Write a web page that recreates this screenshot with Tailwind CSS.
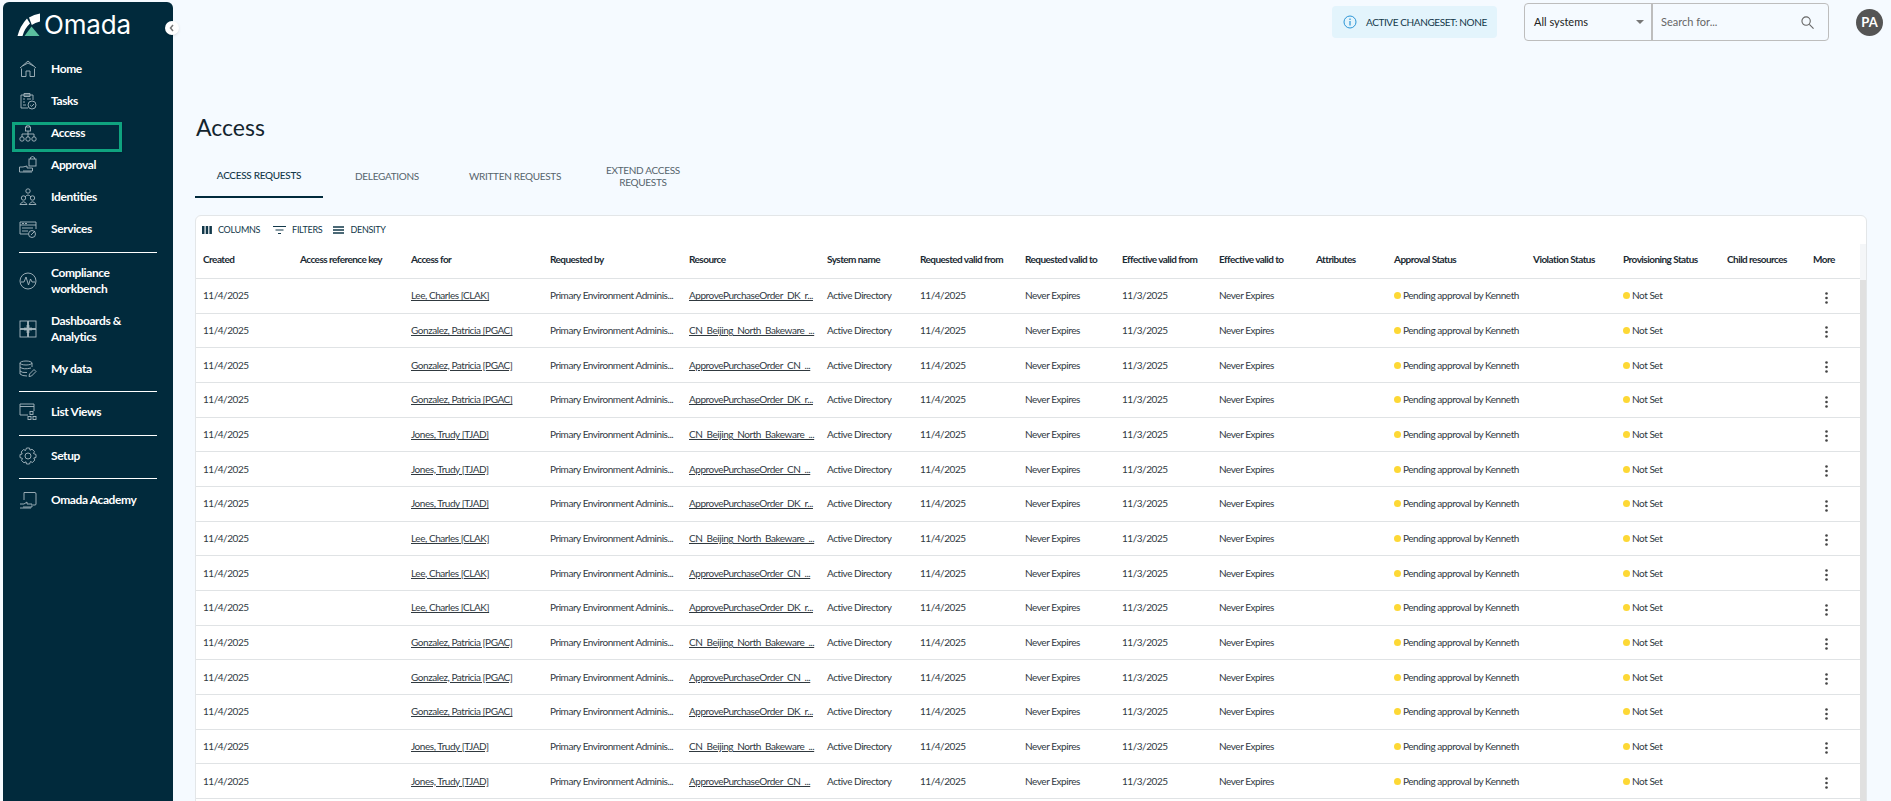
<!DOCTYPE html>
<html>
<head>
<meta charset="utf-8">
<title>Access</title>
<script src="https://cdn.jsdelivr.net/npm/@tailwindcss/browser@4"></script>
</head>
<body class="bg-[#f5faff] h-[801px] overflow-hidden font-['Lato',sans-serif] text-[#1f2a33]">
<div class="flex h-[801px] overflow-hidden">
    <!-- Sidebar -->
    <aside class="relative w-[170px] ml-[3px] mt-[2px] shrink-0 bg-[#012a3c] rounded-t-md text-white">
        <div class="flex items-center h-[40px] pl-[14px] pt-[6px]">
            <svg class="w-[24px] h-[24px] shrink-0" viewBox="0 0 24 24">
                <path d="M0.500 23 Q3 13 10 5.500 L13 10.500 Q7.500 15.500 5.500 23Z" fill="#fff"/>
                <path d="M12 4.500 Q17 1.500 23 0.500 V8.500 Q18 9.500 14.800 12Z" fill="#fff"/>
                <path d="M7.500 23 L14.500 13.500 L22.500 23Z" fill="#5bbf9f"/>
            </svg>
            <span class="ml-[3px] text-[26px] leading-none font-['Inter',sans-serif] tracking-[-0.2px]">Omada</span>
        </div>
        <button class="absolute z-10 right-[-6px] top-[19px] w-[14px] h-[14px] rounded-full bg-white shadow flex items-center justify-center">
            <svg class="w-[8px] h-[8px]" viewBox="0 0 8 8" fill="none" stroke="#777" stroke-width="1.500"><path d="M5 1 L2.500 4 L5 7"/></svg>
        </button>
        <nav class="text-[12px] font-bold tracking-[-0.4px] pt-[11px]">
            <a class="flex items-center h-[32px] pl-[16px]">
                <svg class="w-[18px] h-[18px] shrink-0 text-[#a9b9c1]" viewBox="0 0 18 18" fill="none" stroke="currentColor" stroke-width="0.9"><path d="M1 8 L9 1 L17 8 M2.500 8.500 V16.500 H7 V11 H11 V16.500 H15.500 V8.500 M3.500 6 L9 3 L14.500 6"/></svg>
                <span class="ml-[14px]">Home</span>
            </a>
            <a class="flex items-center h-[32px] pl-[16px]">
                <svg class="w-[18px] h-[18px] shrink-0 text-[#a9b9c1]" viewBox="0 0 18 18" fill="none" stroke="currentColor" stroke-width="0.9"><path d="M9 16 H2 V3 H14 V8 M5 1.500 H11 V4.500 H5Z M4 7 H6 M8 7 H12 M4 10 H6 M4 13 H7"/><circle cx="13" cy="13" r="4"/><path d="M11.200 13 L12.600 14.400 L15 12"/></svg>
                <span class="ml-[14px]">Tasks</span>
            </a>
            <a class="relative flex items-center h-[32px] pl-[16px]">
                <span class="absolute left-[9px] top-[5px] w-[110px] h-[30px] border-[3px] border-[#0fa37f] shadow"></span>
                <svg class="w-[18px] h-[18px] shrink-0 text-[#a9b9c1]" viewBox="0 0 18 18" fill="none" stroke="currentColor" stroke-width="0.9"><rect x="6.500" y="3" width="5" height="4"/><path d="M7.500 3 V1.800 Q9 0 10.500 1.800 V3 M9 7 V10 M3 13 V10 H15 V13 M9 10 V13"/><circle cx="3" cy="15" r="2.200"/><circle cx="9" cy="15" r="2.200"/><circle cx="15" cy="15" r="2.200"/></svg>
                <span class="ml-[14px]">Access</span>
            </a>
            <a class="flex items-center h-[32px] pl-[16px]">
                <svg class="w-[18px] h-[18px] shrink-0 text-[#a9b9c1]" viewBox="0 0 18 18" fill="none" stroke="currentColor" stroke-width="0.9"><rect x="10" y="3" width="7" height="7"/><path d="M11.500 3 V1.500 Q13.500 -0.500 15.500 1.500 V3 M0.500 11 H4 L8 10 V12 H13.500 V15 H4 M0.500 16 H13 M0.500 11 V16"/></svg>
                <span class="ml-[14px]">Approval</span>
            </a>
            <a class="flex items-center h-[32px] pl-[16px]">
                <svg class="w-[18px] h-[18px] shrink-0 text-[#a9b9c1]" viewBox="0 0 18 18" fill="none" stroke="currentColor" stroke-width="0.9"><circle cx="9" cy="3" r="2.200"/><path d="M6 9 Q9 5 12 9"/><circle cx="4.500" cy="10" r="2.200"/><circle cx="13.500" cy="10" r="2.200"/><path d="M1 16.500 Q4.500 11 8 16.500Z M10 16.500 Q13.500 11 17 16.500Z"/></svg>
                <span class="ml-[14px]">Identities</span>
            </a>
            <a class="flex items-center h-[32px] pl-[16px]">
                <svg class="w-[18px] h-[18px] shrink-0 text-[#a9b9c1]" viewBox="0 0 18 18" fill="none" stroke="currentColor" stroke-width="0.9"><path d="M9 14 H1 V2 H17 V9 M1 5 H17 M3 3.500 H5 M6 3.500 H8 M3 8 H14 M3 11 H9"/><circle cx="13" cy="14" r="3.500"/><path d="M12 15 L16 11"/></svg>
                <span class="ml-[14px]">Services</span>
            </a>
            <div class="h-[1px] bg-white mx-[16px] mt-[7px]"></div>
            <a class="flex items-center h-[48px] mt-[4px] pl-[16px]">
                <svg class="w-[18px] h-[18px] shrink-0 text-[#a9b9c1]" viewBox="0 0 18 18" fill="none" stroke="currentColor" stroke-width="0.9"><circle cx="9" cy="9" r="8"/><path d="M2 10 H5 L7 5 L9.500 13 L11.500 7 L13 10 H16"/></svg>
                <span class="ml-[14px] leading-[16px]">Compliance<br>workbench</span>
            </a>
            <a class="flex items-center h-[48px] pl-[16px]">
                <svg class="w-[18px] h-[18px] shrink-0 text-[#a9b9c1]" viewBox="0 0 18 18" fill="none" stroke="currentColor" stroke-width="0.9"><rect x="1" y="1" width="7.500" height="7.500"/><rect x="9.500" y="1" width="7.500" height="7.500"/><rect x="1" y="9.500" width="7.500" height="7.500"/><rect x="9.500" y="9.500" width="7.500" height="7.500"/><path d="M5 9 H13 M9 5 V13" stroke-width="3" opacity="0.7"/></svg>
                <span class="ml-[14px] leading-[16px]">Dashboards &amp;<br>Analytics</span>
            </a>
            <a class="flex items-center h-[32px] mb-[6px] pl-[16px]">
                <svg class="w-[18px] h-[18px] shrink-0 text-[#a9b9c1]" viewBox="0 0 18 18" fill="none" stroke="currentColor" stroke-width="0.9"><ellipse cx="7" cy="3" rx="6" ry="2"/><path d="M1 3 V14 Q3 16 8 16 M1 7 Q4 10 12 8 M1 11 Q3 13 8 12.500 M13 3 V7"/><path d="M10 16.500 L10.500 14 L15 9.500 L17 11.500 L12.500 16Z"/></svg>
                <span class="ml-[14px]">My data</span>
            </a>
            <div class="h-[1px] bg-white mx-[16px]"></div>
            <a class="flex items-center h-[43px] pb-[3px] pl-[16px]">
                <svg class="w-[18px] h-[18px] shrink-0 text-[#a9b9c1]" viewBox="0 0 18 18" fill="none" stroke="currentColor" stroke-width="0.9"><path d="M9 12 H1 V1 H15 V8 M1 3.500 H15"/><rect x="11" y="8.500" width="3" height="3"/><rect x="9" y="13.500" width="3" height="3"/><rect x="14" y="13.500" width="3" height="3"/></svg>
                <span class="ml-[14px]">List Views</span>
            </a>
            <div class="h-[1px] bg-white mx-[16px]"></div>
            <a class="flex items-center h-[42px] pb-[2px] pl-[16px]">
                <svg class="w-[18px] h-[18px] shrink-0 text-[#a9b9c1]" viewBox="0 0 18 18" fill="none" stroke="currentColor" stroke-width="0.9"><circle cx="9" cy="9" r="3"/><path d="M7.500 1 H10.500 L11 3.200 L13 2.200 L15.500 4.500 L14.500 6.500 L17 7.500 V10.500 L14.800 11 L15.800 13 L13.500 15.500 L11.500 14.500 L10.500 17 H7.500 L7 14.800 L5 15.800 L2.500 13.500 L3.500 11.500 L1 10.500 V7.500 L3.200 7 L2.200 5 L4.500 2.500 L6.500 3.500Z"/></svg>
                <span class="ml-[14px]">Setup</span>
            </a>
            <div class="h-[1px] bg-white mx-[16px]"></div>
            <a class="flex items-center h-[43px] pb-[2px] pl-[16px]">
                <svg class="w-[18px] h-[18px] shrink-0 text-[#a9b9c1]" viewBox="0 0 18 18" fill="none" stroke="currentColor" stroke-width="0.9"><path d="M5 9 V1.500 H16 Q17 1.500 17 3 V13 Q17 14 16 14 H14 M1 13 H5 L8 11 V13 H13 V16 H4 M1 17 H12"/></svg>
                <span class="ml-[14px]">Omada Academy</span>
            </a>
        </nav>
    </aside>

    <!-- Main -->
    <main class="flex-1 min-w-0 pl-[22px] pr-[24px]">
        <div class="relative h-[100px]">
            <div class="absolute left-[1137px] top-[6px] w-[165px] h-[32px] rounded bg-[#e3f4fc] flex items-center pl-[11px] text-[10px] tracking-[-0.4px] text-[#12384a]">
                <svg class="w-[14px] h-[14px] text-[#2b95d6]" viewBox="0 0 14 14" fill="none" stroke="currentColor" stroke-width="1"><circle cx="7" cy="7" r="6"/><path d="M7 6 V10.500 M7 3.500 V5" stroke-width="1.200"/></svg>
                <span class="ml-[9px]">ACTIVE CHANGESET: NONE</span>
            </div>
            <div class="absolute left-[1329px] top-[3px] w-[305px] h-[38px] border border-[#bdbdbd] rounded flex text-[11px]">
                <div class="w-[128px] flex items-center justify-between pl-[9px] pr-[7px] border-r-2 border-[#bdbdbd] text-[#222]">
                    <span>All systems</span>
                    <span class="w-0 h-0 border-x-[4px] border-x-transparent border-t-[4px] border-t-[#777]"></span>
                </div>
                <div class="flex-1 flex items-center justify-between pl-[8px] pr-[14px] text-[#666]">
                    <span>Search for...</span>
                    <svg class="w-[13px] h-[13px]" viewBox="0 0 14 14" fill="none" stroke="#666" stroke-width="1.200"><circle cx="5.500" cy="5.500" r="4.500"/><path d="M9 9 L13.500 13.500"/></svg>
                </div>
            </div>
            <div class="absolute left-[1661px] top-[9px] w-[27px] h-[27px] rounded-full bg-[#555] text-white text-[13px] font-bold flex items-center justify-center">PA</div>
        </div>

        <h1 class="text-[23px] leading-[28px] mt-[13px] ml-[1px] text-[#13242e]">Access</h1>

        <div class="flex mt-[13px] h-[44px] text-[10px] tracking-[-0.3px] text-center text-[#56646c]">
            <div class="w-[128px] flex items-center justify-center border-b-2 border-[#012a3c] text-[#12384a] font-medium">ACCESS REQUESTS</div>
            <div class="w-[128px] flex items-center justify-center">DELEGATIONS</div>
            <div class="w-[128px] flex items-center justify-center">WRITTEN REQUESTS</div>
            <div class="w-[128px] flex items-center justify-center leading-[12px] px-[20px]">EXTEND ACCESS REQUESTS</div>
        </div>

        <section class="relative h-[587px] overflow-hidden mt-[17px] bg-white border border-[#e3e6e8] rounded-t-md">
            <div class="flex items-center h-[28px] pl-[6px] text-[9px] tracking-[-0.3px] text-[#12384a]">
                <svg class="w-[10px] h-[8px] mr-[6px]" viewBox="0 0 10 8" fill="#12384a"><rect width="2.500" height="8"/><rect x="3.700" width="2.500" height="8"/><rect x="7.400" width="2.500" height="8"/></svg>
                <span>COLUMNS</span>
                <svg class="w-[13px] h-[8px] ml-[13px] mr-[6px]" viewBox="0 0 13 8" fill="none" stroke="#12384a" stroke-width="1"><path d="M0 0.500 H13 M2.500 4 H10.500 M5 7.500 H8"/></svg>
                <span>FILTERS</span>
                <svg class="w-[11px] h-[8px] ml-[11px] mr-[6px]" viewBox="0 0 11 8" fill="none" stroke="#12384a" stroke-width="1.500"><path d="M0 1 H11 M0 4 H11 M0 7 H11"/></svg>
                <span>DENSITY</span>
            </div>
            <div id="head" class="grid grid-cols-[97px_111px_139px_139px_138px_93px_105px_97px_97px_97px_78px_139px_90px_104px_86px_47px] items-center h-[35px] pb-[3px] pl-[7px] border-b border-[#e0e3e5] text-[10px] tracking-[-0.55px] font-bold text-[#1b2a33]">
                <span>Created</span>
                <span>Access reference key</span>
                <span>Access for</span>
                <span>Requested by</span>
                <span>Resource</span>
                <span>System name</span>
                <span>Requested valid from</span>
                <span>Requested valid to</span>
                <span>Effective valid from</span>
                <span>Effective valid to</span>
                <span>Attributes</span>
                <span>Approval Status</span>
                <span>Violation Status</span>
                <span>Provisioning Status</span>
                <span>Child resources</span>
                <span>More</span>
            </div>
            <div id="rows" class="text-[10px] tracking-[-0.45px] text-[#30393f]"></div>
            <div class="absolute right-0 top-[28px] w-[6px] h-[36px] bg-[#f4f6f8]"></div>
            <div class="absolute right-0 top-[64px] bottom-0 w-[6px] bg-[#e0e0e0]"></div>
        </section>
    </main>
</div>

<script>
var people = ['Lee, Charles [CLAK]', 'Gonzalez, Patricia [PGAC]', 'Gonzalez, Patricia [PGAC]', 'Gonzalez, Patricia [PGAC]', 'Jones, Trudy [TJAD]', 'Jones, Trudy [TJAD]', 'Jones, Trudy [TJAD]', 'Lee, Charles [CLAK]', 'Lee, Charles [CLAK]', 'Lee, Charles [CLAK]', 'Gonzalez, Patricia [PGAC]', 'Gonzalez, Patricia [PGAC]', 'Gonzalez, Patricia [PGAC]', 'Jones, Trudy [TJAD]', 'Jones, Trudy [TJAD]']
var resources = ['ApprovePurchaseOrder_DK_r...', 'CN_Beijing_North_Bakeware_...', 'ApprovePurchaseOrder_CN_...']

var out = ''
people.forEach((name, i) => {
    out += `
    <div class="grid grid-cols-[97px_111px_139px_139px_138px_93px_105px_97px_97px_97px_78px_139px_90px_104px_86px_47px] items-center h-[34.67px] pl-[7px] border-b border-[#e0e3e5]">
        <span>11/4/2025</span>
        <span></span>
        <span class="underline">${name}</span>
        <span>Primary Environment Adminis...</span>
        <span class="underline">${resources[i % 3]}</span>
        <span>Active Directory</span>
        <span>11/4/2025</span>
        <span>Never Expires</span>
        <span>11/3/2025</span>
        <span>Never Expires</span>
        <span></span>
        <span class="flex items-center"><i class="w-[7px] h-[7px] rounded-full bg-[#fdd835] mr-[2px]"></i>Pending approval by Kenneth</span>
        <span></span>
        <span class="flex items-center"><i class="w-[7px] h-[7px] rounded-full bg-[#fdd835] mr-[2px]"></i>Not Set</span>
        <span></span>
        <span class="flex justify-start pl-[12px] pt-[4px]">
            <svg class="w-[3px] h-[12px]" viewBox="0 0 3 12" fill="#444"><circle cx="1.500" cy="1.500" r="1.300"/><circle cx="1.500" cy="6" r="1.300"/><circle cx="1.500" cy="10.500" r="1.300"/></svg>
        </span>
    </div>`
})
document.getElementById('rows').innerHTML = out
</script>
</body>
</html>
